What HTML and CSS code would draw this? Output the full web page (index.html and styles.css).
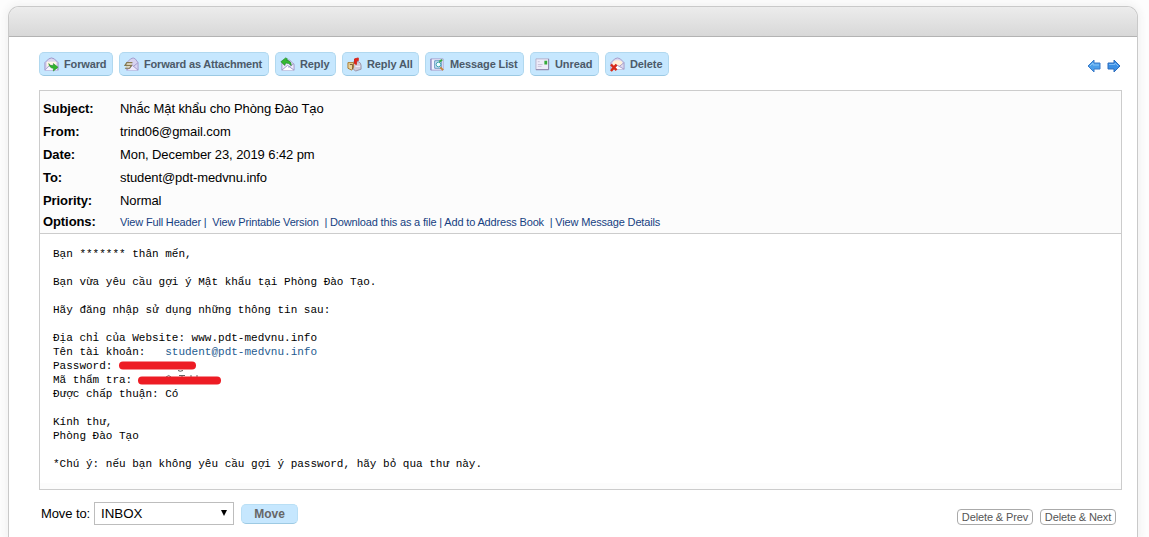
FILE: index.html
```html
<!DOCTYPE html>
<html lang="vi">
<head>
<meta charset="utf-8">
<title>Mail</title>
<link rel="stylesheet" href="styles.css">
</head>
<body>
<main class="window">
  <header class="titlebar"></header>
  <nav class="toolbar">
    <a class="btn b1"><svg class="icon" viewBox="0 0 16 16"><path d="M1 6 5 2Q8 0 11 2L15 6V14H1Z" fill="#dcd8ee" stroke="#9b91c9"/><path d="M3 5H13V10H3Z" fill="#fff6e8"/><path d="M1 14 6 9H10L15 14" fill="#f8f6ff" stroke="#aaa2d2"/><path d="M5 7Q7 10 10 9V7L15 11 10 15V12Q6 12 5 7Z" fill="#32b52d" stroke="#248d26" stroke-width=".6"/></svg><span>Forward</span></a>
    <a class="btn b2"><svg class="icon" viewBox="0 0 16 16"><path d="M3 6 7 2Q10 0 12 2L15 6V14H3Z" fill="#d7d3f0" stroke="#a19bcd"/><path d="M3 14 9 9 15 14M15 6 10 10" fill="#eeeafd" stroke="#a19bcd"/><path d="M9 6H3L1 9H8L6 12H1" fill="none" stroke="#857a50" stroke-width="1.3"/><path d="M3 7.500H8M2 10.500H6" stroke="#eee2a0"/></svg><span>Forward as Attachment</span></a>
    <a class="btn b3"><svg class="icon" viewBox="0 0 16 16"><path d="M2 6 10 3 15 8V14H2Z" fill="#eeeafd" stroke="#9e97c6"/><path d="M2 14 8 9 15 14M15 7 9 11" fill="#fff" stroke="#9e97c6"/><path d="M1 5 6 1 8 2 7 3.500Q12 4 12 9Q9 6 6 6.500L5 9Z" fill="#36b933" stroke="#188021" stroke-width=".7"/></svg><span>Reply</span></a>
    <a class="btn b4"><svg class="icon" viewBox="0 0 16 16"><path d="M7 5H12Q15 6 15 9V13L9 15 6 12V7Z" fill="#cfcad9" stroke="#9791a5"/><path d="M1 6H7V11L5 14 1 12Z" fill="#ead49b" stroke="#a9762c"/><path d="M3 8H6V13" fill="none" stroke="#795832"/><path d="M8 7V2L12 1V4H10V8Z" fill="#e72118" stroke="#d0241c"/><path d="M9 10H14" stroke="#f2f0fa"/></svg><span>Reply All</span></a>
    <a class="btn b5"><svg class="icon" viewBox="0 0 16 16"><path d="M1 2H14V14H1Z" fill="#f2f1ff" stroke="#a6a1cd"/><path d="M1 14V2" stroke="#817bb3"/><path d="M5 4H12V12H5Z" fill="#d4e8f8" stroke="#5b91bb"/><circle cx="9" cy="8" r="2.500" fill="#effcff" stroke="#359fab"/><path d="M10 5 13 3" stroke="#3baa45" stroke-width="2"/><path d="M11 11 14 14" stroke="#c78637" stroke-width="2"/></svg><span>Message List</span></a>
    <a class="btn b6"><svg class="icon" viewBox="0 0 16 16"><path d="M1 2H14.500V13.500H1Z" fill="#eeecfa" stroke="#b4afc9"/><path d="M1 13.500H14.500V2" fill="none" stroke="#8b84aa"/><path d="M3 5H5M3 8H8M3 10H7" stroke="#c7c1d8"/><path d="M10 4H13V8H10Z" fill="#36aa3b"/></svg><span>Unread</span></a>
    <a class="btn b7"><svg class="icon" viewBox="0 0 16 16"><path d="M1 6 5 2Q8 0 11 2L15 6V13H1Z" fill="#dcd8f0" stroke="#a39bc7"/><path d="M3 5Q8 2 13 5V9H3Z" fill="#fff1d9"/><path d="M3 13 8 9 15 13M15 6 10 10" fill="#fff" stroke="#a39bc7"/><path d="M1 8 7 14M7 8 1 15" stroke="#d92a18" stroke-width="2.600"/></svg><span>Delete</span></a>
    <div class="arrows">
      <svg class="arrow" viewBox="0 0 14 14"><path d="M1 7 7 1V4H13V10H7V13Z" fill="#4b9eea" stroke="#3a7bc9"/><path d="M3 7 6 4V6H12" fill="none" stroke="#8ac6f8"/></svg>
      <svg class="arrow" viewBox="0 0 14 14"><path d="M13 7 7 1V4H1V10H7V13Z" fill="#3b8fe4" stroke="#2c6cbd"/><path d="M2 5.500H8V4L11 7" fill="none" stroke="#79b9f5"/></svg>
    </div>
  </nav>
  <section class="message">
    <dl class="headers">
      <dt>Subject:</dt><dd>Nhắc Mật khẩu cho Phòng Đào Tạo</dd>
      <dt>From:</dt><dd>trind06@gmail.com</dd>
      <dt>Date:</dt><dd>Mon, December 23, 2019 6:42 pm</dd>
      <dt>To:</dt><dd>student@pdt-medvnu.info</dd>
      <dt>Priority:</dt><dd>Normal</dd>
      <dt class="opt">Options:</dt><dd class="options"><a>View Full Header</a> |&nbsp; <a>View Printable Version</a> &nbsp;| <a>Download this as a file</a> | <a>Add to Address Book</a> &nbsp;| <a>View Message Details</a></dd>
    </dl>
    <div class="body"><pre class="mail">Bạn ******* thân mến,

Bạn vừa yêu cầu gợi ý Mật khẩu tại Phòng Đào Tạo.

Hãy đăng nhập sử dụng những thông tin sau:

Địa chỉ của Website: www.pdt-medvnu.info
Tên tài khoản:   <a class="address">student@pdt-medvnu.info</a>
Password: <svg class="mark" width="79" height="12" viewBox="0 0 79 12"><path d="M5 5.500H74" stroke="#ed1c24" stroke-width="8" stroke-linecap="round"/><path d="M60 10.500Q62 12 65 10.500" fill="none" stroke="#555"/></svg>
Mã thẩm tra: <svg class="mark code" width="85" height="12" viewBox="0 0 85 12"><path d="M29 3Q32 0 34 3M42 1.500H48M45 1V4M54 1V3M60 1V3" fill="none" stroke="#666"/><path d="M5 6.500H80" stroke="#ed1c24" stroke-width="8" stroke-linecap="round"/></svg>
Được chấp thuận: Có

Kính thư,
Phòng Đào Tạo

*Chú ý: nếu bạn không yêu cầu gợi ý password, hãy bỏ qua thư này.</pre></div>
  </section>
  <footer class="footer">
    <label class="move-label">Move to:</label>
    <div class="select"><span>INBOX</span><svg width="6" height="7" viewBox="0 0 6 7"><path d="M0 0H6L3 6Z" fill="#000"/></svg></div>
    <button class="move">Move</button>
    <div class="after"><button>Delete &amp; Prev</button><button>Delete &amp; Next</button></div>
  </footer>
</main>
</body>
</html>
```
FILE: styles.css
```css
* { box-sizing: border-box; }
html, body { margin: 0; height: 537px; overflow: hidden; }
body { padding: 6px 11px 0 8px; background: #fdfdfd; font-family: "Liberation Sans", Arial, sans-serif; font-size: 13px; color: #000; }
.window { width: 1130px; height: 531px; border: 1px solid #c9c9c9; border-bottom: 0; border-radius: 11px 11px 0 0; background: #fff; box-shadow: 0 0 7px 3px #f3f3f3; overflow: hidden; }
.titlebar { height: 30px; border-bottom: 1px solid #b3b3b3; background: linear-gradient(#ececec, #d8d8d8); }
.toolbar { display: flex; gap: 6px; padding: 15px 16px 0 30px; height: 53px; }
.btn { display: flex; align-items: center; height: 24px; padding-left: 4px; gap: 5px; border: 1px solid #b1d8ef; border-bottom-color: #9bc9e3; border-radius: 5px; background: #c6e7fe; color: #4c5a69; font-size: 11px; font-weight: bold; white-space: nowrap; }
.icon { width: 15px; height: 15px; flex: none; }
.b1 { width: 74px; letter-spacing: -0.15px; }
.b2 { width: 150px; letter-spacing: -0.18px; }
.b3 { width: 61px; letter-spacing: -0.1px; }
.b4 { width: 77px; letter-spacing: -0.1px; }
.b5 { width: 99px; letter-spacing: -0.12px; }
.b6 { width: 69px; letter-spacing: -0.1px; }
.b7 { width: 64px; letter-spacing: -0.1px; }
.arrows { display: flex; gap: 6px; margin-left: auto; padding-top: 7px; }
.arrow { width: 14px; height: 14px; }
.message { width: 1083px; height: 400px; margin-left: 30px; border: 1px solid #ccc; background: #fcfcfc; }
.headers { display: grid; grid-template-columns: 77px 1fr; grid-template-rows: repeat(5, 23px) 21px; height: 143px; margin: 0; padding: 6px 3px 0; border-bottom: 1px solid #ccc; line-height: 23px; letter-spacing: -0.09px; }
dt { font-weight: bold; }
dd { margin: 0; }
.opt { line-height: 20px; }
.options { line-height: 21px; font-size: 11px; letter-spacing: -0.162px; color: #163f82; white-space: pre-wrap; }
.body { height: 249px; padding: 13px 13px 0; background: #fff; }
.mail { margin: 0; font: 11px/14px "Liberation Mono", monospace; }
.address { color: #255b8f; }
.mark { vertical-align: top; height: 12px; margin-top: 1px; margin-left: -1px; }
.code { margin-left: -2px; }
.footer { display: flex; align-items: flex-start; padding: 12px 21px 0 32px; }
.move-label { line-height: 24px; width: 53px; white-space: nowrap; letter-spacing: -0.1px; }
.select { display: flex; align-items: center; justify-content: space-between; width: 140px; height: 23px; padding: 0 6px 0 6px; border: 1px solid #bdbdbd; background: #fff; font-size: 13.333px; }
button { font-family: inherit; padding: 0; white-space: nowrap; }
.move { width: 57px; height: 20px; margin: 2px 0 0 7px; border: 1px solid #b9dff5; border-bottom-color: #9dcae3; border-radius: 5px; background: #c6e7fe; color: #666; font-size: 12px; font-weight: bold; }
.after { display: flex; gap: 7px; margin-left: auto; padding-top: 7px; }
.after button { width: 76px; height: 16px; border: 1px solid #aaa; border-radius: 4px; background: #fff; color: #555; font-size: 11px; letter-spacing: -0.12px; line-height: 14px; }
```
